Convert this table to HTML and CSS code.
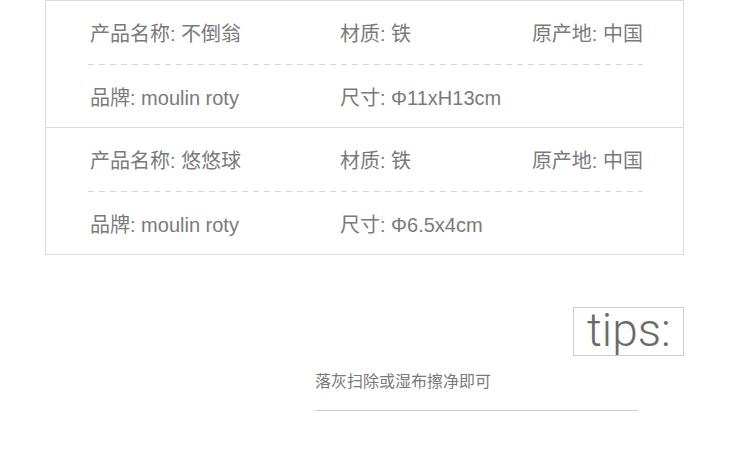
FILE: index.html
```html
<!DOCTYPE html>
<html lang="zh-CN">
<head>
    <meta charset="UTF-8">
    <meta name="viewport" content="width=device-width, initial-scale=1.0">
    <title>产品参数</title>
    <link rel="stylesheet" href="styles.css">
</head>
<body>
    <main>
        <div class="spec-table">
            <section class="spec-group">
                <div class="spec-row">
                    <span>产品名称: 不倒翁</span>
                    <span>材质: 铁</span>
                    <span>原产地: 中国</span>
                </div>
                <div class="spec-row">
                    <span>品牌: moulin roty</span>
                    <span>尺寸: Φ11xH13cm</span>
                    <span></span>
                </div>
            </section>
            <section class="spec-group">
                <div class="spec-row">
                    <span>产品名称: 悠悠球</span>
                    <span>材质: 铁</span>
                    <span>原产地: 中国</span>
                </div>
                <div class="spec-row">
                    <span>品牌: moulin roty</span>
                    <span>尺寸: Φ6.5x4cm</span>
                    <span></span>
                </div>
            </section>
        </div>

        <div class="tips-wrap">
            <div class="tips">tips:</div>
        </div>

        <div class="care">
            <p>落灰扫除或湿布擦净即可</p>
        </div>
    </main>
</body>
</html>
```

FILE: styles.css
```css
* {
    box-sizing: border-box;
}

body {
    margin: 0;
    background: #fff;
    color: #7a7a7a;
    font-family: "Liberation Sans", "Noto Sans CJK SC", sans-serif;
}

main {
    width: 730px;
}

.spec-table {
    margin-left: 45px;
    width: 639px;
    border: 1px solid #dcdcdc;
    border-bottom: none;
}

.spec-group {
    border-bottom: 1px solid #dcdcdc;
    padding: 0 40px 0 42px;
}

.spec-row {
    display: grid;
    grid-template-columns: 250px 1fr auto;
    align-items: center;
    height: 63px;
    font-size: 20px;
    padding-left: 2px;
}

.spec-row + .spec-row {
    height: 63px;
    padding-top: 1px;
    background: repeating-linear-gradient(to right, #d6d6d6 0 6px, transparent 6px 11px) top left / 100% 1px no-repeat;
}

.tips-wrap {
    display: flex;
    justify-content: flex-end;
    padding-right: 46px;
    margin-top: 52px;
}

.tips {
    width: 111px;
    height: 49px;
    border: 1px solid #cccccc;
    padding-left: 13px;
    font-family: Roboto, "Liberation Sans", sans-serif;
    font-weight: 300;
    font-size: 46px;
    line-height: 44px;
    color: #6a6a6a;
}

.care {
    margin-left: 315px;
    width: 323px;
    border-bottom: 1px solid #cfcfcf;
    padding-bottom: 19px;
}

.care p {
    margin: 16px 0 0;
    font-size: 16px;
    line-height: 19px;
    color: #7a7a7a;
}
```
